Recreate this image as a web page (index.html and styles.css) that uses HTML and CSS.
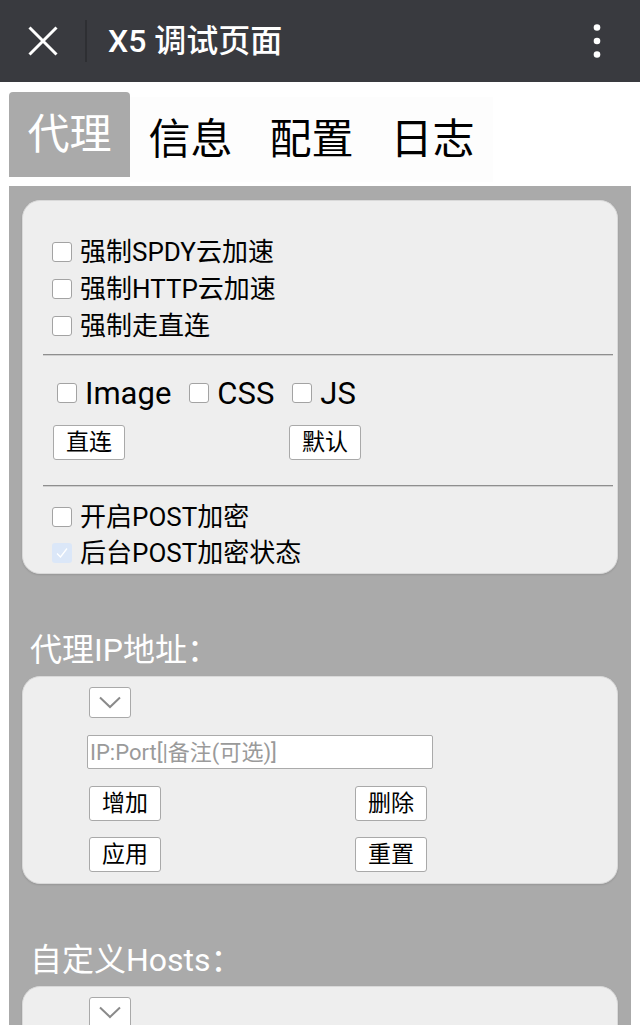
FILE: index.html
```html
<!DOCTYPE html>
<html lang="zh-CN">
<head>
<meta charset="utf-8">
<title>X5 调试页面</title>
<link rel="stylesheet" href="styles.css">
</head>
<body>
<header class="topbar">
  <span class="close-btn">
    <svg width="30" height="30" viewBox="0 0 30 30"><path d="M1.5 1.5 L28.5 28.5 M28.5 1.5 L1.5 28.5" stroke="#fff" stroke-width="3" fill="none"/></svg>
  </span>
  <span class="sep"></span>
  <h1 class="title">X5 调试页面</h1>
  <span class="more">
    <svg width="8" height="34" viewBox="0 0 8 34"><circle cx="4" cy="3.5" r="3.3" fill="#fff"/><circle cx="4" cy="17" r="3.3" fill="#fff"/><circle cx="4" cy="30.5" r="3.3" fill="#fff"/></svg>
  </span>
</header>

<nav class="tabs">
  <div class="tab active">代理</div>
  <div class="tab">信息</div>
  <div class="tab">配置</div>
  <div class="tab">日志</div>
</nav>

<main class="panel">
  <section class="card card-main">
    <div class="group group-top">
      <label class="row"><span class="cb"></span><span>强制SPDY云加速</span></label>
      <label class="row"><span class="cb"></span><span>强制HTTP云加速</span></label>
      <label class="row"><span class="cb"></span><span>强制走直连</span></label>
    </div>
    <hr class="divider">
    <div class="res-row">
      <label class="res"><span class="cb"></span><span>Image</span></label>
      <label class="res"><span class="cb"></span><span>CSS</span></label>
      <label class="res"><span class="cb"></span><span>JS</span></label>
    </div>
    <div class="btn-grid btn-grid-a">
      <button class="btn">直连</button>
      <button class="btn">默认</button>
    </div>
    <hr class="divider divider-2">
    <div class="group group-bottom">
      <label class="row"><span class="cb"></span><span>开启POST加密</span></label>
      <label class="row"><span class="cb cb-disabled"><svg width="20" height="20" viewBox="0 0 20 20"><path d="M5 10.5 L8.5 14 L15 5.5" stroke="#fff" stroke-width="1.3" fill="none"/></svg></span><span>后台POST加密状态</span></label>
    </div>
  </section>

  <h2 class="section-title">代理IP地址：</h2>
  <section class="card card-form">
    <div class="select"><svg width="24" height="13" viewBox="0 0 24 13"><polyline points="2,1.5 12,11 22,1.5" stroke="#8a8a8a" stroke-width="2" fill="none"/></svg></div>
    <input class="text-input" type="text" placeholder="IP:Port[|备注(可选)]">
    <div class="btn-grid btn-grid-b">
      <button class="btn">增加</button>
      <button class="btn">删除</button>
      <button class="btn">应用</button>
      <button class="btn">重置</button>
    </div>
  </section>

  <h2 class="section-title">自定义Hosts：</h2>
  <section class="card card-form card-last">
    <div class="select"><svg width="24" height="13" viewBox="0 0 24 13"><polyline points="2,1.5 12,11 22,1.5" stroke="#8a8a8a" stroke-width="2" fill="none"/></svg></div>
  </section>
</main>
</body>
</html>
```

FILE: styles.css
```css
html, body {
  margin: 0;
  padding: 0;
  overflow: hidden;
}
body {
  font-family: Roboto, "Noto Sans CJK SC", sans-serif;
  background: #fff;
  color: #000;
}

/* top bar */
.topbar {
  height: 82px;
  background: #393a3f;
  display: flex;
  align-items: center;
  color: #fff;
}
.close-btn {
  display: flex;
  margin-left: 28px;
  width: 30px;
  height: 30px;
}
.sep {
  width: 2px;
  height: 42px;
  margin-left: 27px;
  background: #2e2f33;
}
.title {
  margin: 0 0 0 21px;
  font-size: 32px;
  font-weight: 500;
  line-height: 1;
}
.more {
  display: flex;
  margin-left: auto;
  margin-right: 39px;
}

/* tabs */
.tabs {
  display: flex;
  align-items: flex-start;
  padding: 10px 9px 0;
  height: 90px;
}
.tab {
  width: 121px;
  height: 85px;
  margin-top: 5px;
  display: flex;
  align-items: center;
  justify-content: center;
  font-size: 42px;
  line-height: 1;
  background: #fdfdfd;
}
.tab.active {
  margin-top: 0;
  background: #aaa;
  color: #fff;
  border-radius: 4px 4px 0 0;
}

/* main panel */
.panel {
  margin: 4px 9px 0;
  background: #aaa;
  padding: 14px 13px 80px;
}
.card {
  background: #eee;
  border: 1px solid #d9d9d9;
  border-radius: 18px;
  box-shadow: 0 1px 2px rgba(0, 0, 0, 0.12);
}
.card-main {
  padding: 32px 4px 2px 20px;
}

.cb {
  display: inline-block;
  box-sizing: border-box;
  width: 20px;
  height: 20px;
  border: 1.5px solid #a3a3a3;
  border-radius: 3px;
  background: #fff;
  margin-right: 8px;
  flex: none;
}
.cb-disabled {
  border: none;
  background: #dbe7f8;
}
.cb-disabled svg {
  display: block;
}

.row {
  display: flex;
  align-items: center;
  margin-left: 9px;
  font-size: 26px;
  line-height: 1;
}
.group-top .row {
  height: 37px;
}
.group-bottom {
  margin-top: 12px;
}
.group-bottom .row {
  height: 36px;
}

.divider {
  margin: 10px 0 0;
  border: 0;
  height: 0;
  border-top: 1px solid #8e8e8e;
  border-bottom: 1px solid #cfcfcf;
}
.divider-2 {
  margin-top: 25px;
}

.res-row {
  display: flex;
  align-items: center;
  height: 38px;
  margin: 18px 0 0 14px;
  font-size: 31px;
  line-height: 1;
}
.res {
  display: flex;
  align-items: center;
  margin-right: 18px;
}

.btn-grid {
  display: grid;
}
.btn-grid-a {
  grid-template-columns: 236px 72px;
  margin: 13px 0 0 10px;
}
.btn-grid-b {
  grid-template-columns: 266px 72px;
  row-gap: 16px;
  margin: 17px 0 0 2px;
}
.btn {
  box-sizing: border-box;
  width: 72px;
  height: 35px;
  padding: 0;
  border: 1.5px solid #a9a9a9;
  border-radius: 3px;
  background: #fff;
  color: #000;
  font-family: inherit;
  font-size: 23px;
  line-height: 1;
}

/* section titles */
.section-title {
  margin: 56px 0 6px 8px;
  height: 40px;
  line-height: 40px;
  font-size: 32px;
  font-weight: 400;
  color: #fff;
}

/* form cards */
.card-form {
  padding: 10px 0 11px 64px;
}
.card-last {
  padding-bottom: 120px;
}
.select {
  box-sizing: border-box;
  width: 42px;
  height: 31px;
  margin-left: 2px;
  border: 1.5px solid #a9a9a9;
  border-radius: 3px;
  background: #fff;
  display: flex;
  align-items: center;
  justify-content: center;
}
.text-input {
  display: block;
  box-sizing: border-box;
  width: 346px;
  height: 34px;
  margin-top: 17px;
  padding: 0 2px;
  border: 1.5px solid #aaa;
  border-radius: 2px;
  background: #fff;
  font-family: inherit;
  font-size: 22px;
  outline: none;
}
.text-input::placeholder {
  color: #9a9a9a;
}
```
